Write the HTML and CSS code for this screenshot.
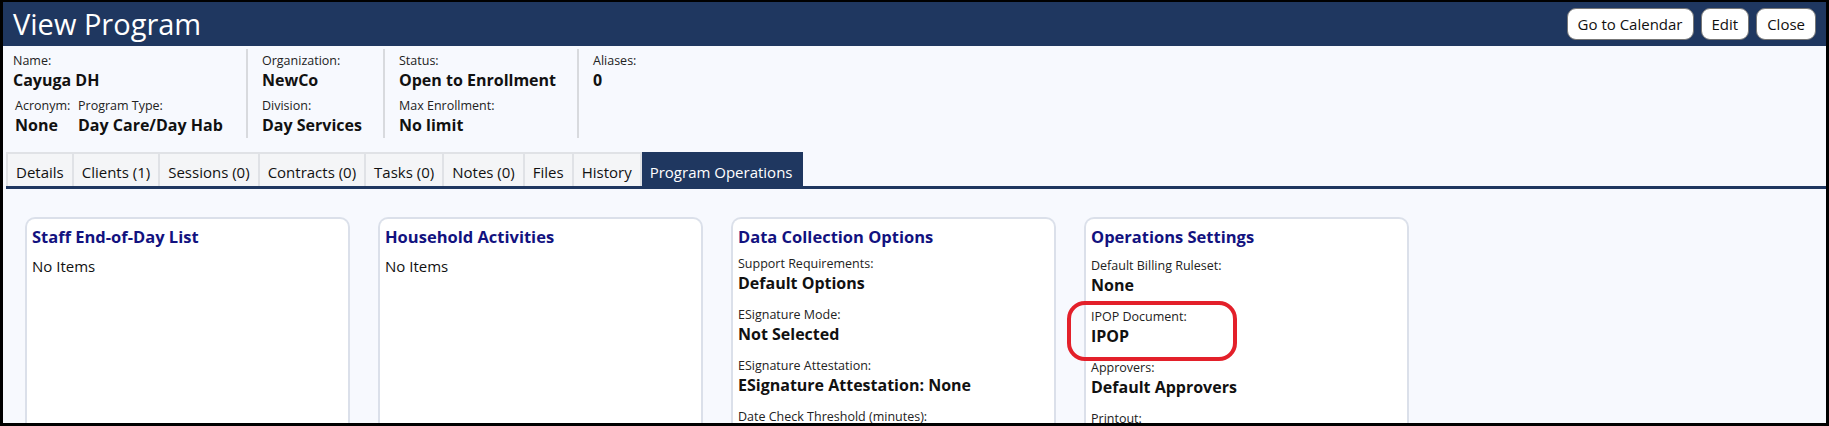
FILE: index.html
```html
<!DOCTYPE html>
<html lang="en">
<head>
    <meta charset="UTF-8">
    <meta name="viewport" content="width=device-width, initial-scale=1.0">
    <title>View Program</title>
    <link rel="stylesheet" href="styles.css">
</head>
<body>
    <div class="window">
        <header class="topbar">
            <h1>View Program</h1>
            <div class="actions">
                <button>Go to Calendar</button>
                <button>Edit</button>
                <button>Close</button>
            </div>
        </header>

        <section class="summary">
            <div class="col col-name">
                <div class="field">
                    <div class="lbl">Name:</div>
                    <div class="val">Cayuga DH</div>
                </div>
                <div class="pair">
                    <div class="field acronym">
                        <div class="lbl">Acronym:</div>
                        <div class="val">None</div>
                    </div>
                    <div class="field">
                        <div class="lbl">Program Type:</div>
                        <div class="val">Day Care/Day Hab</div>
                    </div>
                </div>
            </div>
            <div class="col col-org">
                <div class="field">
                    <div class="lbl">Organization:</div>
                    <div class="val">NewCo</div>
                </div>
                <div class="field">
                    <div class="lbl">Division:</div>
                    <div class="val">Day Services</div>
                </div>
            </div>
            <div class="col col-status">
                <div class="field">
                    <div class="lbl">Status:</div>
                    <div class="val">Open to Enrollment</div>
                </div>
                <div class="field">
                    <div class="lbl">Max Enrollment:</div>
                    <div class="val">No limit</div>
                </div>
            </div>
            <div class="col">
                <div class="field">
                    <div class="lbl">Aliases:</div>
                    <div class="val">0</div>
                </div>
            </div>
        </section>

        <nav class="tabs">
            <div class="tab">Details</div>
            <div class="tab">Clients (1)</div>
            <div class="tab">Sessions (0)</div>
            <div class="tab">Contracts (0)</div>
            <div class="tab">Tasks (0)</div>
            <div class="tab">Notes (0)</div>
            <div class="tab">Files</div>
            <div class="tab">History</div>
            <div class="tab active">Program Operations</div>
        </nav>

        <main class="cards">
            <div class="card">
                <h2>Staff End-of-Day List</h2>
                <p class="empty">No Items</p>
            </div>
            <div class="card">
                <h2>Household Activities</h2>
                <p class="empty">No Items</p>
            </div>
            <div class="card">
                <h2>Data Collection Options</h2>
                <div class="field">
                    <div class="lbl">Support Requirements:</div>
                    <div class="val">Default Options</div>
                </div>
                <div class="field">
                    <div class="lbl">ESignature Mode:</div>
                    <div class="val">Not Selected</div>
                </div>
                <div class="field">
                    <div class="lbl">ESignature Attestation:</div>
                    <div class="val">ESignature Attestation: None</div>
                </div>
                <div class="field">
                    <div class="lbl">Date Check Threshold (minutes):</div>
                </div>
            </div>
            <div class="card card-ops">
                <h2>Operations Settings</h2>
                <div class="field">
                    <div class="lbl">Default Billing Ruleset:</div>
                    <div class="val">None</div>
                </div>
                <div class="field marked">
                    <div class="lbl">IPOP Document:</div>
                    <div class="val">IPOP</div>
                    <span class="ring"></span>
                </div>
                <div class="field">
                    <div class="lbl">Approvers:</div>
                    <div class="val">Default Approvers</div>
                </div>
                <div class="field">
                    <div class="lbl">Printout:</div>
                </div>
            </div>
        </main>
    </div>
</body>
</html>
```

FILE: styles.css
```css
* {
    box-sizing: border-box;
}
body {
    margin: 0;
    font-family: "Open Sans", "Noto Sans", sans-serif;
    color: #111;
    background: #fff;
}
.window {
    height: 426px;
    overflow: hidden;
    border: 3px solid #000;
    border-top-width: 2px;
    background: #f7f9fe;
}

/* title bar */
.topbar {
    height: 44px;
    background: #1f3760;
    display: flex;
    align-items: center;
    justify-content: space-between;
    padding: 0 10px 0 10px;
}
.topbar h1 {
    margin: 0;
    color: #fff;
    font-weight: 400;
    font-size: 29px;
    line-height: 44px;
}
.actions {
    display: flex;
    gap: 7px;
}
.actions button {
    height: 32px;
    padding: 0 10px;
    background: #fff;
    border: 1px solid #777;
    border-radius: 9px;
    font-family: "Open Sans", sans-serif;
    font-size: 15px;
    color: #111;
}

/* summary strip */
.summary {
    display: flex;
    padding: 3px 0 14px;
}
.col {
    padding: 4px 20px 2px 14px;
    border-right: 2px solid #d8dade;
}
.col:last-child {
    border-right: none;
}
.col-name {
    width: 245px;
    padding-left: 10px;
}
.col-org {
    width: 137px;
}
.col-status {
    width: 194px;
}
.pair {
    display: flex;
    margin-left: 2px;
}
.acronym {
    width: 63px;
}
.lbl {
    font-size: 12.5px;
    line-height: 16px;
    color: #222;
}
.val {
    font-size: 16px;
    font-weight: 700;
    line-height: 22px;
}
.summary .field {
    margin-bottom: 7px;
}
.summary .pair .field,
.col-org .field:last-child,
.col-status .field:last-child {
    margin-bottom: 0;
}

/* tabs */
.tabs {
    display: flex;
    margin-left: 3px;
    border-bottom: 3px solid #1f3760;
}
.tab {
    height: 34px;
    padding: 6px 8px 0;
    font-size: 15px;
    line-height: 24px;
    background: #f4f5f7;
    border-top: 2px solid #e0e2e6;
    border-right: 2px solid #e0e2e6;
}
.tab:first-child {
    border-left: 2px solid #e0e2e6;
}
.tab.active {
    background: #1f3760;
    border-color: #1f3760;
    color: #fff;
}

/* cards */
.cards {
    display: flex;
    align-items: flex-start;
    gap: 28px;
    padding: 28px 0 0 22px;
}
.card {
    width: 325px;
    height: 240px;
    background: #fff;
    border: 2px solid #dbe0ea;
    border-bottom: none;
    border-radius: 10px 10px 0 0;
    padding: 7px 5px;
}
.card h2 {
    margin: 0 0 8px;
    font-size: 16.5px;
    line-height: 22px;
    font-weight: 700;
    color: #12127f;
}
.card-ops h2 {
    margin-bottom: 10px;
}
.card .field {
    margin-bottom: 13px;
}
.empty {
    margin: 0;
    font-size: 15px;
    line-height: 20px;
}
.marked {
    position: relative;
}
.ring {
    position: absolute;
    left: -24px;
    top: -8px;
    width: 170px;
    height: 60px;
    border: 4px solid #e3202a;
    border-radius: 18px;
}
```
